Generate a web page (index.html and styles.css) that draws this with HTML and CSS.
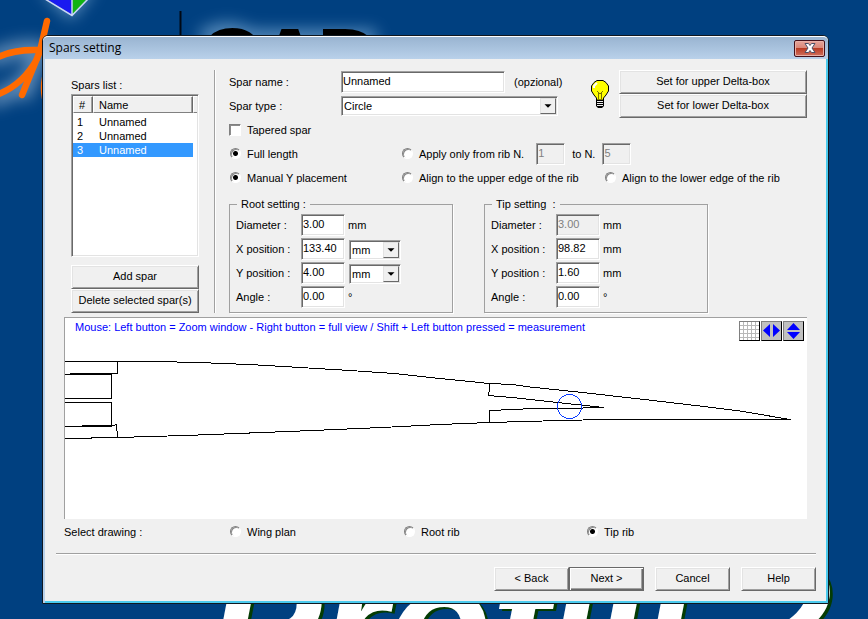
FILE: index.html
```html
<!DOCTYPE html>
<html lang="en">
<head>
<meta charset="utf-8">
<title>Spars setting</title>
<link rel="stylesheet" href="styles.css">
</head>
<body>
<div class="wallpaper" aria-hidden="true">
  <svg class="emblem" width="440" height="140" viewBox="0 0 440 140">
    <defs>
      <filter id="soft" filterUnits="userSpaceOnUse" x="-40" y="-60" width="520" height="240"><feGaussianBlur stdDeviation="8"/></filter>
    </defs>
    <path d="M38 -12L71 20L96 -12Z" fill="#9fc4e6" opacity=".6" filter="url(#soft)"/>
    <path d="M-10 60Q20 45 40 50L22 98M-10 100Q25 90 38 62" fill="none" stroke="#a9c3de" stroke-width="16" opacity=".6" filter="url(#soft)"/>
    <path d="M202 40Q226 24 250 38H376" fill="none" stroke="#9cc6e8" stroke-width="16" opacity=".6" filter="url(#soft)"/>
    <path d="M45 -2L72 15V-8Z" fill="#1a1af0"/>
    <path d="M72 15L88 -2L72 -8Z" fill="#12b312"/>
    <path d="M45 -1L72 15.500L88 -1M72 15V-2" fill="none" stroke="#c9d6f5" stroke-width="1.500"/>
    <path d="M47 21L40 51L22 95M-4 58Q14 49 38 50M-4 95Q22 86 37 59M45 78Q43 88 45 98" fill="none" stroke="#ff6a00" stroke-width="6.500" stroke-linecap="round" stroke-linejoin="round"/>
    <path d="M180.500 11V36" stroke="#000814" stroke-width="2"/>
  </svg>
  <span class="cad">CAD</span>
  <span class="brand">Profili 2</span>
</div>

<main class="dialog">
  <header class="titlebar">
    <h1>Spars setting</h1>
    <button class="close" type="button" aria-label="Close">
      <svg width="12" height="10" viewBox="0 0 12 10"><path d="M1 .5H4.500L6 2.500L7.500 .5H11L8 5L11 9.500H7.500L6 7.500L4.500 9.500H1L4 5Z" fill="#fff" stroke="#4c5168"/></svg>
    </button>
  </header>

  <form class="content">
    <div class="top">
      <section class="spars">
        <h2>Spars list :</h2>
        <div class="list">
          <table>
            <thead><tr><th class="num">#</th><th class="name">Name</th><th class="rest"></th></tr></thead>
            <tbody>
              <tr><td>1</td><td>Unnamed</td><td class="rest"></td></tr>
              <tr><td>2</td><td>Unnamed</td><td class="rest"></td></tr>
              <tr class="selected"><td>3</td><td>Unnamed</td><td class="rest"></td></tr>
            </tbody>
          </table>
        </div>
        <button class="btn" type="button">Add spar</button>
        <button class="btn" type="button">Delete selected spar(s)</button>
      </section>

      <div class="divider"></div>

      <section class="settings">
        <div class="head">
          <div class="fields">
            <div class="row">
              <label class="caption" for="spar-name">Spar name :</label>
              <input class="box long" id="spar-name" type="text" value="Unnamed">
              <span class="hint">(opzional)</span>
            </div>
            <div class="row">
              <label class="caption" for="spar-type">Spar type :</label>
              <span class="drop wide">
                <select id="spar-type"><option>Circle</option></select>
                <svg class="arrow" width="16" height="16" viewBox="0 0 16 16"><path d="M4 6H12L8 10Z"/></svg>
              </span>
            </div>
          </div>
          <svg class="bulb" width="18" height="28" viewBox="0 0 18 28">
            <path d="M6 .5H12L15 2.500L17.500 6V11L15 15L12.500 18V20H5.500V18L3 15L.5 11V6L3 2.500Z" fill="#ff0" stroke="#000"/>
            <path d="M6 11L9 14L12 11M7.500 13V19M10.500 13V19" fill="none" stroke="#777300"/>
            <path d="M3 8V6L6 3" fill="none" stroke="#fff" stroke-width="2"/>
            <path d="M5 20H13V26L11 28H7L5 26Z" fill="#000"/>
            <path d="M6 21.500H12M6 23.500H12M6 25.500H12" stroke="#eee"/>
          </svg>
          <div class="presets">
            <button class="btn" type="button">Set for upper Delta-box</button>
            <button class="btn" type="button">Set for lower Delta-box</button>
          </div>
        </div>
        <div class="row">
          <label class="option"><input type="checkbox">Tapered spar</label>
        </div>
        <div class="row choices">
          <label class="option"><input type="radio" name="length" checked>Full length</label>
          <div class="range">
            <label class="option"><input type="radio" name="length">Apply only from rib N.</label>
            <input class="box tiny" type="text" value="1" aria-label="From rib" disabled>
            <label for="rib-to">to N.</label>
            <input class="box tiny" id="rib-to" type="text" value="5" disabled>
          </div>
        </div>
        <div class="row choices">
          <label class="option"><input type="radio" name="place" checked>Manual Y placement</label>
          <label class="option"><input type="radio" name="place">Align to the upper edge of the rib</label>
          <label class="option"><input type="radio" name="place">Align to the lower edge of the rib</label>
        </div>

        <div class="groups">
          <fieldset>
            <legend>Root setting :</legend>
            <div class="row"><label for="rd">Diameter :</label><input class="box" id="rd" type="text" value="3.00"><span>mm</span></div>
            <div class="row"><label for="rx">X position :</label><input class="box" id="rx" type="text" value="133.40">
              <span class="drop"><select aria-label="X unit"><option>mm</option></select><svg class="arrow" width="16" height="16" viewBox="0 0 16 16"><path d="M4 6H12L8 10Z"/></svg></span></div>
            <div class="row"><label for="ry">Y position :</label><input class="box" id="ry" type="text" value="4.00">
              <span class="drop"><select aria-label="Y unit"><option>mm</option></select><svg class="arrow" width="16" height="16" viewBox="0 0 16 16"><path d="M4 6H12L8 10Z"/></svg></span></div>
            <div class="row"><label for="ra">Angle :</label><input class="box" id="ra" type="text" value="0.00"><span class="degree">°</span></div>
          </fieldset>
          <fieldset>
            <legend>Tip setting&nbsp; :</legend>
            <div class="row"><label for="td">Diameter :</label><input class="box" id="td" type="text" value="3.00" disabled><span>mm</span></div>
            <div class="row"><label for="tx">X position :</label><input class="box" id="tx" type="text" value="98.82"><span>mm</span></div>
            <div class="row"><label for="ty">Y position :</label><input class="box" id="ty" type="text" value="1.60"><span>mm</span></div>
            <div class="row"><label for="ta">Angle :</label><input class="box" id="ta" type="text" value="0.00"><span class="degree">°</span></div>
          </fieldset>
        </div>
      </section>
    </div>

    <section class="canvas">
      <svg class="drawing" viewBox="65 318 742 201" fill="none" stroke="#000" shape-rendering="crispEdges" role="img" aria-label="Tip rib section">
        <path d="M65 361.500H155L198 362.500L223 363.500L249 364.500L300 367.500L350 370.500L394 373.500L440 378.500L470 381.500L489 383.500L513 384.500L530 387L578 392L640 399L700 406L740 411L790 419.500"/>
        <path d="M65 438.500H91L92 437.500H117L151 436.500L185 435.500L237 433.500L313 430.500L382 427.500L440 424.500L490 422.500L543 421L603 419.500H790.500"/>
        <path d="M117.500 361V373.500H70M65 374.500H111.500V398.500H65M65 402.500H111.500V426.500H65M82 425.500H113L116.500 424.500L117.500 437.500"/>
        <path d="M489.500 383V389L488.500 395.500L512 397.500L557 402.500L595 406.500L603.500 407.500M489.500 422.500V410.500L535 408.500H580L586 407.500H603.500"/>
        <circle cx="569.500" cy="406.500" r="12" stroke="#0a3cff"/>
      </svg>
      <p class="tip">Mouse: Left button = Zoom window - Right button = full view / Shift + Left button pressed = measurement</p>
      <div class="tools">
        <button type="button" class="tool grid" aria-label="Grid"><svg width="19" height="18" viewBox="0 0 19 18"><path d="M3.500 0V18M7.500 0V18M11.500 0V18M15.500 0V18M0 3.500H19M0 7.500H19M0 11.500H19M0 15.500H19" stroke="#b8b8b8"/></svg></button>
        <button type="button" class="tool" aria-label="Flip horizontally"><svg width="19" height="18" viewBox="0 0 19 18"><path d="M8 2V15L1 8.500ZM11 2V15L18 8.500Z" fill="#00f"/></svg></button>
        <button type="button" class="tool" aria-label="Flip vertically"><svg width="19" height="18" viewBox="0 0 19 18"><path d="M3 8H16L9.500 1ZM3 10H16L9.500 17Z" fill="#00f"/></svg></button>
      </div>
    </section>

    <div class="select-drawing">
      <span>Select drawing :</span>
      <label class="option"><input type="radio" name="view">Wing plan</label>
      <label class="option"><input type="radio" name="view">Root rib</label>
      <label class="option"><input type="radio" name="view" checked>Tip rib</label>
    </div>

    <hr>

    <footer>
      <div class="pair">
        <button class="btn" type="button">&lt; Back</button>
        <button class="btn default" type="button">Next &gt;</button>
      </div>
      <button class="btn" type="button">Cancel</button>
      <button class="btn" type="button">Help</button>
    </footer>
  </form>
</main>
</body>
</html>
```
FILE: styles.css
```css
* { box-sizing: border-box; }

body {
  margin: 0;
  padding: 35px 39px 16px 42px;
  background: #004080;
  font: 11px/14px "Liberation Sans", Arial, sans-serif;
  color: #000;
}

h1, h2, p { margin: 0; font-size: inherit; font-weight: normal; }

button, input, select { font: inherit; color: inherit; margin: 0; border-radius: 0; }

/* Desktop behind the dialog */
.wallpaper { position: absolute; inset: 0; overflow: hidden; }
.emblem { position: absolute; left: 0; top: 0; }
.cad, .brand { position: absolute; font-weight: bold; line-height: 1; white-space: nowrap; }
.cad { left: 201px; top: 18px; font-size: 82px; -webkit-text-stroke: 4px #000; }
.brand {
  left: 208px;
  top: 539px;
  font-size: 170px;
  font-style: italic;
  color: #fff;
  text-shadow: 3px 2px 0 #043c04;
}

/* Dialog frame */
.dialog {
  position: relative;
  border: 1px solid #101820;
  border-radius: 6px 6px 0 0;
  background: #f0f0f0;
  box-shadow: inset 2px 0 #b9d1ea, inset -2px -2px #4ccbee;
}
.titlebar {
  display: flex;
  align-items: center;
  justify-content: space-between;
  height: 23px;
  padding: 0 3px 0 6px;
  border-top: 1px solid #fff;
  border-radius: 5px 5px 0 0;
  background: linear-gradient(#99b4d1, #b9d1ea);
}
.titlebar h1 { font: 12px/16px "Open Sans", "Noto Sans", sans-serif; }
.close {
  display: flex;
  align-items: center;
  justify-content: center;
  width: 31px;
  height: 17px;
  padding: 0;
  border: 1px solid #43101a;
  border-radius: 2px;
  background: linear-gradient(#e6a59b 0, #d98576 48%, #b93c24 50%, #d0705e 100%);
  box-shadow: inset 0 0 0 1px #e8b0a6;
}
.close svg { flex: none; }
.content { padding: 11px 12px 12px 13px; }

/* Bevelled controls */
.btn {
  height: 24px;
  padding: 0 0 2px;
  border: 1px solid;
  border-color: #fff #696969 #696969 #fff;
  background: #f0f0f0;
  box-shadow: inset 1px 1px #e3e3e3, inset -1px -1px #a0a0a0;
}
.btn.default { border-color: #696969; box-shadow: inset 1px 1px #fff, inset -1px -1px #696969, inset -2px -2px #a0a0a0; }

.box, .drop, .list {
  border: 1px solid;
  border-color: #a0a0a0 #fff #fff #a0a0a0;
  background: #fff;
  box-shadow: inset 1px 1px #696969, inset -1px -1px #e3e3e3;
}
.box { width: 44px; height: 22px; padding: 0 1px 3px; }
.box.long { width: 164px; }
.box.tiny { width: 29px; }
.box:disabled { background: #f0f0f0; color: #808080; }

.drop { position: relative; width: 52px; height: 20px; margin: 2px 0 0 4px; }
.drop.wide { width: 217px; margin: 0; }
.drop select {
  appearance: none;
  display: block;
  width: 100%;
  height: 18px;
  padding: 0 18px 0 2px;
  border: 0;
  background: none;
}
.arrow {
  position: absolute;
  top: 1px;
  right: 1px;
  border: 1px solid;
  border-color: #e3e3e3 #696969 #696969 #e3e3e3;
  background: #f0f0f0;
  pointer-events: none;
}

.option { display: flex; align-items: center; white-space: nowrap; }
.option input {
  appearance: none;
  width: 12px;
  height: 12px;
  margin: 0 6px 1px 0;
  border: 1px solid;
  border-color: #808080 #fff #fff #808080;
  background: #fff;
  box-shadow: inset 1px 1px #8c8c8c;
}
.option input[type="radio"] { width: 11px; height: 11px; margin: 0 6px 2px 1px; border-radius: 50%; }
.option input[type="radio"]:checked { background: radial-gradient(circle, #000 0 2px, #fff 3px); }

/* Upper area */
.top {
  display: grid;
  grid-template-columns: 128px 2px 1fr;
  padding: 0 9px 0 15px;
}
.spars { display: flex; flex-direction: column; }
.spars h2 { height: 24px; padding-top: 8px; }
.list { height: 163px; margin-bottom: 8px; padding: 1px; }
.list table { width: 100%; border-collapse: separate; border-spacing: 0; table-layout: fixed; }
.list th {
  height: 17px;
  padding: 0 5px;
  border: 1px solid;
  border-color: #fff #696969 #808080 #fff;
  background: #f0f0f0;
  box-shadow: inset -1px 0 #a0a0a0;
  font-weight: normal;
  text-align: left;
}
.list th.num { width: 20px; }
.list .rest { width: 4px; padding: 0; border-right: 0; box-shadow: none; }
.list td { height: 14px; padding: 0 5px; line-height: 14px; }
.list td:first-child { padding: 0 4px; }
.list td:nth-child(2) { padding: 0 6px; }
.list tbody::before { content: ""; display: table-row; height: 2px; }
.selected td { background: #3399ff; color: #fff; }
.selected td.rest { background: #fff; }

.divider { margin: 0 -15px 0 15px; border-left: 1px solid #a0a0a0; border-right: 1px solid #fff; }
.settings { padding-left: 28px; }
.row { display: flex; align-items: center; height: 24px; white-space: nowrap; }
.head { display: flex; align-items: center; }
.fields { flex: 1; }
.caption { width: 112px; }
.box + .hint { margin-left: 9px; }
.bulb { margin-right: 10px; }
.presets { display: flex; flex-direction: column; width: 188px; }
.choices { display: grid; grid-template-columns: 172px 203px 1fr; }
.range { grid-column: span 2; display: flex; align-items: center; gap: 7px; }
.range .box:first-of-type { margin-left: 5px; }

.groups { display: grid; grid-template-columns: 224px 224px; gap: 31px; margin-top: 7px; }
fieldset {
  min-width: 0;
  margin: 0;
  padding: 2px 6px 3px;
  border: 1px solid #a0a0a0;
  box-shadow: 1px 1px #fff;
}
legend { margin-left: 1px; padding: 0 4px; line-height: 14px; }
fieldset label { width: 65px; }
fieldset .box + span:not(.drop) { margin-left: 3px; }
fieldset .box + .degree { margin-left: 7px; }

/* Rib drawing */
.canvas {
  position: relative;
  margin: 4px 9px 0 8px;
  border-top: 1px solid #a0a0a0;
  border-left: 1px solid #a0a0a0;
  background: #fff;
}
.drawing { display: block; width: 100%; }
.tip { position: absolute; left: 10px; top: 2px; color: #00f; }
.tools { position: absolute; top: 3px; right: 3px; display: flex; gap: 1px; }
.tool {
  display: flex;
  padding: 0;
  border: 1px solid;
  border-color: #808080 #000 #000 #808080;
  background: #c0c0c0;
}
.tool.grid { background: #fff; }

.select-drawing {
  display: grid;
  grid-template-columns: 165px 174px 183px 1fr;
  align-items: center;
  height: 26px;
  padding-left: 8px;
}
hr { margin: 8px 0 12px; border: 0; border-top: 1px solid #a0a0a0; border-bottom: 1px solid #fff; }
footer { display: flex; justify-content: flex-end; gap: 11px; }
footer .btn { width: 75px; }
.pair { display: flex; }
```
